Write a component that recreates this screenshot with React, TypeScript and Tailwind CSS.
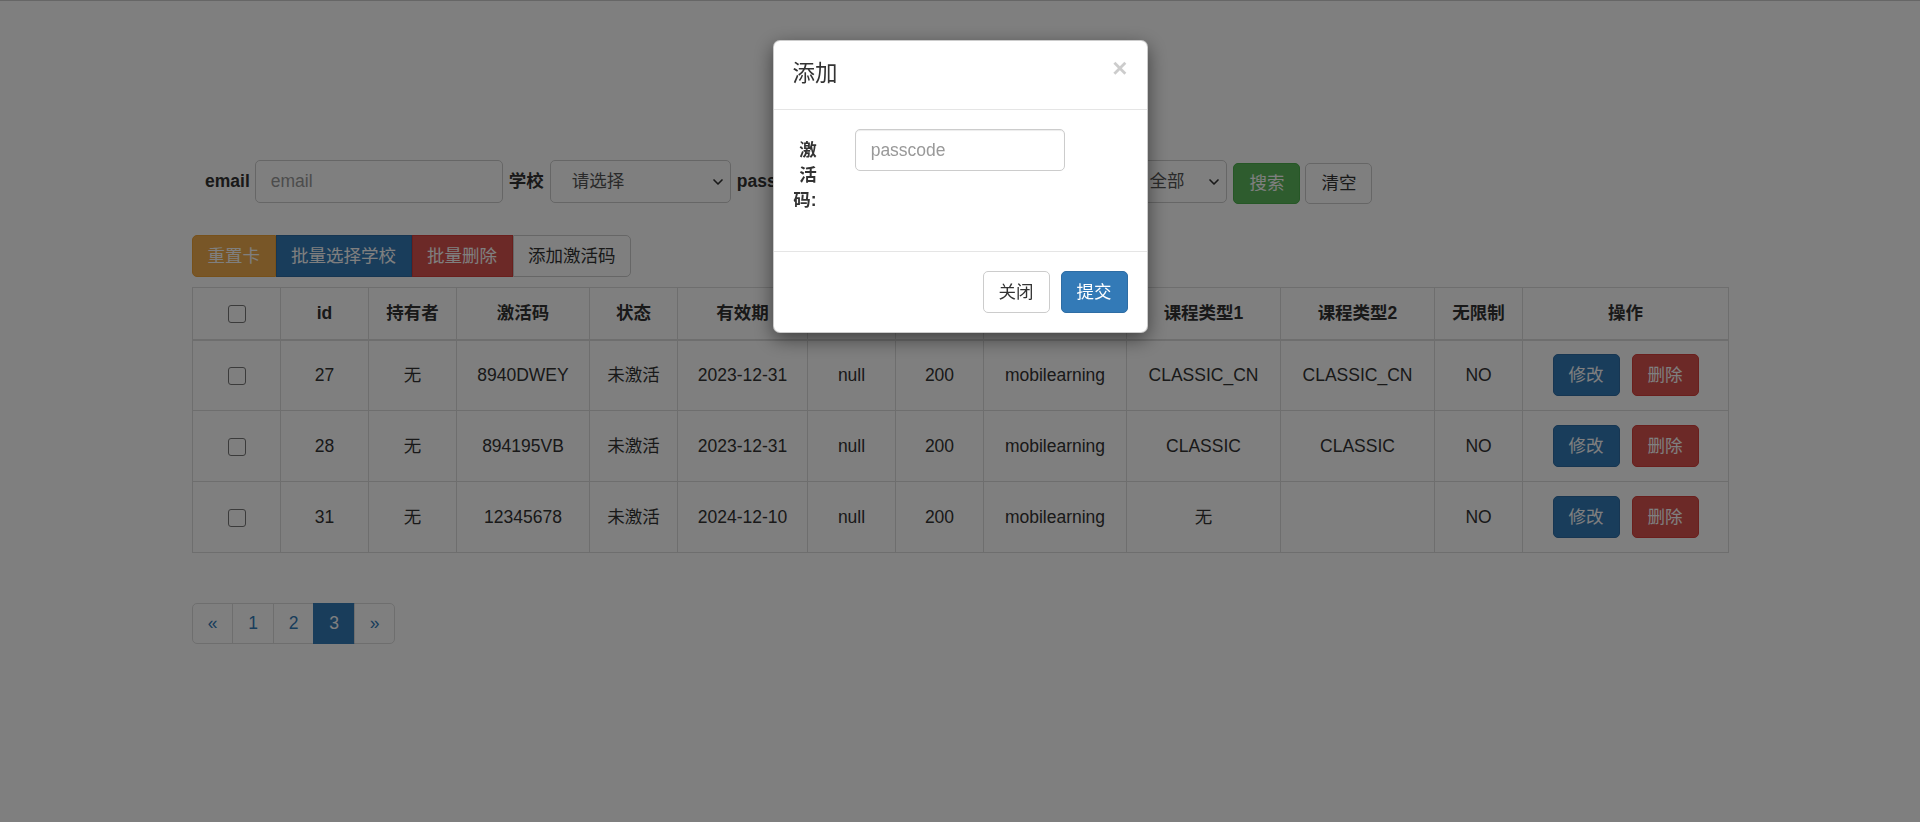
import { ChevronDown } from 'lucide-react'

const rows = [
  { id: 27, owner: '无', code: '8940DWEY', state: '未激活', date: '2023-12-31', school: 'null', days: 200, src: 'mobilearning', t1: 'CLASSIC_CN', t2: 'CLASSIC_CN', unlimited: 'NO' },
  { id: 28, owner: '无', code: '894195VB', state: '未激活', date: '2023-12-31', school: 'null', days: 200, src: 'mobilearning', t1: 'CLASSIC', t2: 'CLASSIC', unlimited: 'NO' },
  { id: 31, owner: '无', code: '12345678', state: '未激活', date: '2024-12-10', school: 'null', days: 200, src: 'mobilearning', t1: '无', t2: '', unlimited: 'NO' },
]

const widths = [88, 88, 88, 133, 88, 130, 88, 88, 143, 154, 154, 88, 206]
const headers = ['', 'id', '持有者', '激活码', '状态', '有效期', '学校', '天数', '平台', '课程类型1', '课程类型2', '无限制', '操作']

function Check() {
  return <span className="inline-block w-[18px] h-[18px] border border-[#767676] rounded-[3px] bg-white align-middle" />
}

function Select({ text, w }: { text: string; w: string }) {
  return (
    <div className={`${w} h-[43px] flex items-center justify-between border border-[#ccc] rounded-[5px] bg-white pl-[21px] pr-[4px] text-[#555]`}>
      <span>{text}</span>
      <ChevronDown size={16} strokeWidth={2.5} className="text-[#333]" />
    </div>
  )
}

export default function App() {
  return (
    <div className="min-h-screen bg-white text-[#333] text-[17.5px] leading-[25px] font-['Liberation_Sans','Noto_Sans_CJK_SC',sans-serif]">
      <div className="h-px bg-[#ccc]" />
      <div className="w-[80%] mx-auto pt-[158px]">
        {/* search form */}
        <div className="flex items-center pl-[13px]">
          <label className="font-bold mr-[5px]">email</label>
          <div className="w-[248px] h-[43px] flex items-center border border-[#ccc] rounded-[5px] px-[15px] text-[#999]">email</div>
          <label className="font-bold ml-[6px] mr-[6px]">学校</label>
          <Select text="请选择" w="w-[181px]" />
          <label className="font-bold ml-[6px] mr-[6px]">passcode</label>
          <div className="w-[257px] h-[43px] flex items-center border border-[#ccc] rounded-[5px] px-[15px] text-[#999]">passcode</div>
          <label className="font-bold ml-[6px] mr-[6px]">状态</label>
          <Select text="全部" w="w-[100px]" />
          <button className="ml-[6px] mt-[4px] h-[41px] px-[15px] rounded-[5px] bg-[#5cb85c] border border-[#4cae4c] text-white">搜索</button>
          <button className="ml-[5px] mt-[4px] h-[41px] px-[15px] rounded-[5px] bg-white border border-[#ccc]">清空</button>
        </div>

        {/* batch buttons */}
        <div className="flex mt-[31px]">
          <button className="h-[42px] px-[14.5px] rounded-l-[5px] bg-[#f0ad4e] border border-[#eea236] text-white">重置卡</button>
          <button className="h-[42px] px-[14.5px] bg-[#337ab7] border border-[#2e6da4] text-white">批量选择学校</button>
          <button className="h-[42px] px-[14.5px] bg-[#d9534f] border border-[#d43f3a] text-white">批量删除</button>
          <button className="h-[42px] px-[14.5px] rounded-r-[5px] bg-white border border-[#ccc]">添加激活码</button>
        </div>

        {/* table */}
        <table className="mt-[10px] w-full table-fixed border-collapse border border-[#ddd] text-center">
          <colgroup>
            {widths.map((w, i) => <col key={i} style={{ width: w }} />)}
          </colgroup>
          <thead>
            <tr className="h-[52px]">
              {headers.map((h, i) => (
                <th key={i} className="border border-[#ddd] border-b-2 font-bold px-[10px] align-middle">
                  {i === 0 ? <Check /> : h}
                </th>
              ))}
            </tr>
          </thead>
          <tbody>
            {rows.map(r => (
              <tr key={r.id} className="h-[71px]">
                <td className="border border-[#ddd] align-middle"><Check /></td>
                <td className="border border-[#ddd]">{r.id}</td>
                <td className="border border-[#ddd]">{r.owner}</td>
                <td className="border border-[#ddd]">{r.code}</td>
                <td className="border border-[#ddd]">{r.state}</td>
                <td className="border border-[#ddd]">{r.date}</td>
                <td className="border border-[#ddd]">{r.school}</td>
                <td className="border border-[#ddd]">{r.days}</td>
                <td className="border border-[#ddd]">{r.src}</td>
                <td className="border border-[#ddd]">{r.t1}</td>
                <td className="border border-[#ddd]">{r.t2}</td>
                <td className="border border-[#ddd]">{r.unlimited}</td>
                <td className="border border-[#ddd]">
                  <div className="flex justify-center gap-[12px]">
                    <button className="h-[42px] px-[15px] rounded-[5px] bg-[#337ab7] border border-[#2e6da4] text-white">修改</button>
                    <button className="h-[42px] px-[15px] rounded-[5px] bg-[#d9534f] border border-[#d43f3a] text-white">删除</button>
                  </div>
                </td>
              </tr>
            ))}
          </tbody>
        </table>

        {/* pagination */}
        <div className="flex mt-[50px] text-[#337ab7]">
          <span className="h-[41px] w-[41px] flex items-center justify-center border border-[#ddd] rounded-l-[5px]">«</span>
          <span className="h-[41px] w-[42px] -ml-px flex items-center justify-center border border-[#ddd]">1</span>
          <span className="h-[41px] w-[41px] -ml-px flex items-center justify-center border border-[#ddd]">2</span>
          <span className="h-[41px] w-[42px] -ml-px flex items-center justify-center border border-[#337ab7] bg-[#337ab7] text-white">3</span>
          <span className="h-[41px] w-[41px] -ml-px flex items-center justify-center border border-[#ddd] rounded-r-[5px]">»</span>
        </div>
      </div>

      {/* modal backdrop + dialog */}
      <div className="fixed inset-0 bg-[rgba(0,0,0,0.5)] flex justify-center items-start pt-[40px]">
        <div className="w-[375px] bg-white rounded-[7px] border border-black/20 shadow-[0_6px_19px_rgba(0,0,0,0.5)]">
          <div className="flex items-center justify-between px-[19px] h-[69px] border-b border-[#e5e5e5]">
            <h4 className="text-[22.5px] leading-[32px] font-normal -mt-[2px]">添加</h4>
            <span className="text-[26px] font-bold text-black/20 leading-none -mt-[14px]">×</span>
          </div>
          <div className="p-[19px]">
            <div className="grid grid-cols-12 -mx-[19px] mb-[19px]">
              <label className="col-span-2 px-[19px] pt-[9px] text-right font-bold break-all">激活码:</label>
              <div className="col-span-8 px-[19px]">
                <div className="h-[42px] flex items-center border border-[#ccc] rounded-[5px] px-[15px] text-[#999] shadow-[inset_0_1px_1px_rgba(0,0,0,0.075)]">passcode</div>
              </div>
            </div>
          </div>
          <div className="flex justify-end gap-[11px] px-[19px] py-[19px] border-t border-[#e5e5e5]">
            <button className="h-[42px] px-[15px] rounded-[5px] bg-white border border-[#ccc]">关闭</button>
            <button className="h-[42px] px-[15px] rounded-[5px] bg-[#337ab7] border border-[#2e6da4] text-white">提交</button>
          </div>
        </div>
      </div>
    </div>
  )
}
